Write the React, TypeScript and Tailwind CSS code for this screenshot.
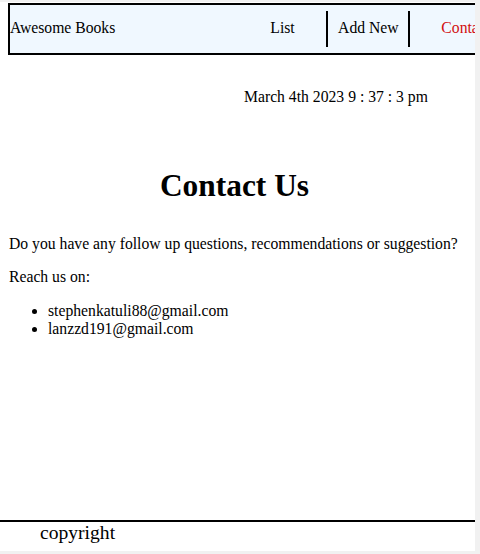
export default function App() {
  return (
    <div className="flex h-[554px] w-[480px] flex-col bg-[#f1f1f1] font-['Liberation_Serif',serif] text-black">
      <div className="flex min-h-0 flex-1">
        <div className="flex w-[475px] flex-col overflow-hidden bg-white">
          <div className="h-[2px] shrink-0 bg-[#f1f1f1]" />
          <nav className="ml-2 mt-px flex h-[52px] w-[560px] shrink-0 items-center border-2 border-black bg-[#f0f8ff] text-[15.7px]">
            <span className="-mt-[2px]">Awesome Books</span>
            <ul className="ml-[135px] flex items-center">
              <li className="-mt-[2px] w-[76px] pl-[20px] text-left">List</li>
              <li className="flex h-[36px] w-[84px] items-center justify-center border-x-2 border-black pb-[2px]">Add New</li>
              <li className="-mt-[2px] pl-[31px] text-[#d20f0f]">Contact</li>
            </ul>
          </nav>
          <p className="mt-[32px] pl-[244px] text-[15.7px] leading-5">March 4th 2023 9 : 37 : 3 pm</p>

          <h1 className="mt-[61px] pr-[6px] text-center text-[31.4px] font-bold leading-9">Contact Us</h1>
          <div className="px-[9px] text-[15.7px] leading-[18px]">
            <p className="mt-[31px] whitespace-nowrap">Do you have any follow up questions, recommendations or suggestion?</p>
            <p className="mt-[15px]">Reach us on:</p>
            <ul className="mt-[16px] list-disc pl-[39px]">
              <li>stephenkatuli88@gmail.com</li>
              <li>lanzzd191@gmail.com</li>
            </ul>
          </div>

          <footer className="mt-auto h-[31px] shrink-0 border-t-2 border-black pl-[40px] text-[19.6px] leading-[22px]">
            copyright
          </footer>
        </div>
        <div className="w-[5px]" />
      </div>
      <div className="h-[3px] shrink-0" />
    </div>
  );
}
